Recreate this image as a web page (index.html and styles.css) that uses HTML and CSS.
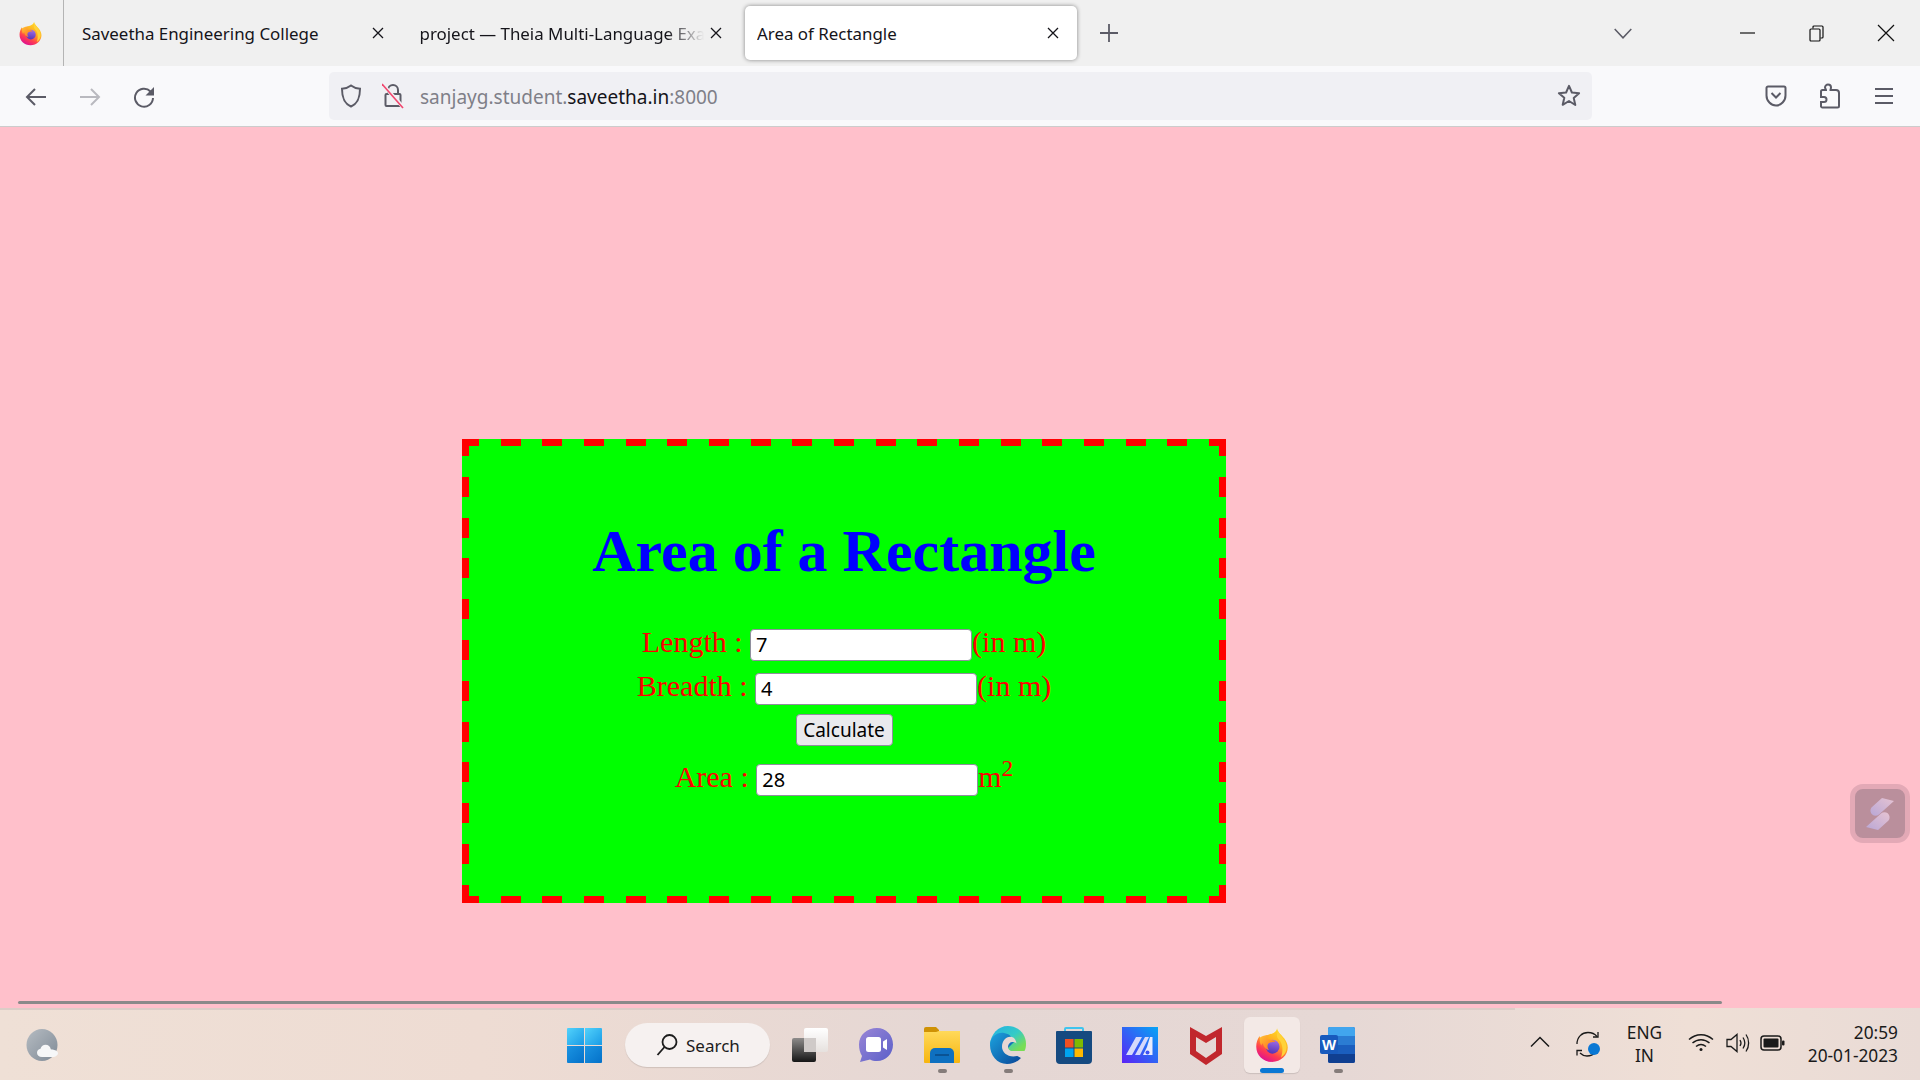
FILE: index.html
```html
<!DOCTYPE html>
<html lang="en">
<head>
  <meta charset="UTF-8">
  <title>Area of Rectangle</title>
  <link rel="stylesheet" href="styles.css">
</head>
<body>
  <svg class="defs" width="0" height="0">
    <defs>
      <linearGradient id="ffBody" x1="0.85" y1="0.05" x2="0.35" y2="1">
        <stop offset="0" stop-color="#ffe226"/>
        <stop offset="0.45" stop-color="#ffa820"/>
        <stop offset="0.75" stop-color="#ff3d4f"/>
        <stop offset="1" stop-color="#e0128f"/>
      </linearGradient>
      <linearGradient id="ffGlobe" x1="0.6" y1="0" x2="0.4" y2="1">
        <stop offset="0" stop-color="#a06ee8"/>
        <stop offset="1" stop-color="#5433b4"/>
      </linearGradient>
      <linearGradient id="ffFox" x1="0" y1="0" x2="1" y2="1">
        <stop offset="0" stop-color="#ffc233"/>
        <stop offset="1" stop-color="#ff6a1f"/>
      </linearGradient>
      <symbol id="firefox" viewBox="0 0 32 32">
        <path fill="url(#ffBody)" d="M20.5 1c.6 4 4.300 6 6.300 9 1.900 2.800 3.200 5.300 3.200 8.200C30 25 24 31 16 31S2 25 2 17.500c0-3.500 1-6.800 3-9.500 .1 1.700.7 3 1.800 4 .9-2.700 3-4.600 6-5.200 3.500-.9 7.200-2 7.700-5.800z"/>
        <path fill="#ffd23a" d="M21 3c3 6 8 9 8 15 0 4-2 7-5 9 2-5 2-12-2-16-3-3-1-6-1-8z"/>
        <circle cx="16.500" cy="17.500" r="6.200" fill="url(#ffGlobe)"/>
        <path fill="url(#ffFox)" d="M5 9.500c2.500-2 5.500-2.700 8.500-2-1.500.8-2.300 1.700-2.500 3 2.500 1.300 6.500.6 8 2.500-2.200.2-4.500.5-5.800 1.500-1.700 1.300-1.500 4.300.3 6-2.700-.5-5.300-2.700-5.500-6-.7.3-1.200 1-1.500 2C5.300 14.800 5 12 5 9.500z"/>
      </symbol>
    </defs>
  </svg>

  <div class="tabbar">
    <div class="app-logo">
      <svg class="tab-ff" viewBox="0 0 32 32"><use href="#firefox"/></svg>
    </div>
    <div class="tabs">
      <div class="tab">
        <span class="tab-title">Saveetha Engineering College</span>
        <svg class="tab-close" viewBox="0 0 12 12"><path d="M1 1l10 10M11 1L1 11"/></svg>
      </div>
      <div class="tab">
        <span class="tab-title tab-fade">project — Theia Multi-Language Example</span>
        <svg class="tab-close" viewBox="0 0 12 12"><path d="M1 1l10 10M11 1L1 11"/></svg>
      </div>
      <div class="tab tab-active">
        <span class="tab-title">Area of Rectangle</span>
        <svg class="tab-close" viewBox="0 0 12 12"><path d="M1 1l10 10M11 1L1 11"/></svg>
      </div>
    </div>
    <svg class="new-tab" viewBox="0 0 18 18"><path d="M9 0v18M0 9h18"/></svg>
    <svg class="tab-list" viewBox="0 0 18 11"><path d="M.7 1L9 9.800 17.300 1"/></svg>
    <div class="win-btn">
      <svg width="15" height="2" viewBox="0 0 15 2"><path d="M0 1h15" stroke="#111" stroke-width="1.200"/></svg>
    </div>
    <div class="win-btn">
      <svg width="15" height="17" viewBox="0 0 15 17" fill="none" stroke="#111" stroke-width="1.200"><rect x="1" y="4" width="10" height="12" rx="1"/><path d="M4 3.500V2a1 1 0 011-1h8a1 1 0 011 1v10a1 1 0 01-1 1h-1.500"/></svg>
    </div>
    <div class="win-btn">
      <svg width="18" height="18" viewBox="0 0 18 18"><path d="M1 1l16 16M17 1L1 17" stroke="#111" stroke-width="1.200"/></svg>
    </div>
  </div>

  <div class="toolbar">
    <div class="nav-btn nav-low">
      <svg class="ico" width="22" height="20" viewBox="0 0 22 20"><path d="M21 10H2M10 2l-8 8 8 8"/></svg>
    </div>
    <div class="nav-btn nav-low nav-off">
      <svg class="ico" width="22" height="20" viewBox="0 0 22 20"><path d="M1 10h19M12 2l8 8-8 8"/></svg>
    </div>
    <div class="nav-btn nav-low">
      <svg class="ico" width="22" height="22" viewBox="0 0 22 22"><path d="M17.500 5.500A9 9 0 1020 12"/><path class="solid" d="M21 1v8.500h-8.500z"/></svg>
    </div>
    <div class="urlbar">
      <svg class="ico url-ico" width="22" height="24" viewBox="0 0 22 24"><path d="M11 1.500c2.500 2 5.500 3 9 3.200 0 7-1 14-9 17.800C3 18.700 2 11.700 2 4.700c3.500-.2 6.500-1.200 9-3.200z"/></svg>
      <svg class="url-lock" width="22" height="26" viewBox="0 0 22 26" fill="none"><path stroke="#5b5b66" stroke-width="2" d="M6 11V7a5 5 0 0110 0v4M4.500 11h13a1 1 0 011 1v10a1 1 0 01-1 1h-13a1 1 0 01-1-1V12a1 1 0 011-1z"/><path stroke="#f2f0f4" stroke-width="4" d="M1 2l20 22"/><path stroke="#f0476f" stroke-width="1.600" d="M0 1l21 24"/></svg>
      <div class="url-text"><span class="url-dim">sanjayg.student.</span>saveetha.in<span class="url-dim">:8000</span></div>
      <svg class="ico url-star" width="24" height="24" viewBox="0 0 24 24"><path d="M12 1.800l2.900 6.700 7.200.7-5.400 4.700 1.600 7.100L12 17l-6.300 3.800 1.600-7.100L1.900 9.200l7.200-.7z" stroke-linejoin="round"/></svg>
    </div>
    <div class="nav-btn nav-first">
      <svg class="ico" width="22" height="22" viewBox="0 0 22 22"><path d="M3 1.500h16a1.500 1.500 0 011.500 1.500v7.500c0 5.500-4.500 10-9.500 10s-9.500-4.500-9.500-10V3A1.500 1.500 0 013 1.500z"/><path d="M6.500 8l4.500 4.500L15.500 8"/></svg>
    </div>
    <div class="nav-btn">
      <svg class="ico" width="22" height="26" viewBox="0 0 22 26"><path d="M9 1.500c2 0 3 1.500 3 3 0 1-.5 1.500-.5 2.500h5.500a3 3 0 013 3v13a1.500 1.500 0 01-1.500 1.500H3.500A1.500 1.500 0 012 23.500V19h3a2.500 2.500 0 000-5H2v-5.500A1.500 1.500 0 013.500 7h3.500c0-1-1-1.500-1-2.500 0-1.500 1.500-3 3-3z"/></svg>
    </div>
    <div class="nav-btn">
      <svg class="ico" width="20" height="18" viewBox="0 0 20 18"><path d="M1 2h18M1 9h18M1 16h18"/></svg>
    </div>
  </div>

  <main class="page">
    <section class="panel">
      <h1 class="panel-title">Area of a Rectangle</h1>
      <form class="calc">
        <div class="row">Length : <input class="field" type="text" value="7">(in m)</div>
        <div class="row">Breadth : <input class="field" type="text" value="4">(in m)</div>
        <div class="row row-btn"><button class="calc-btn" type="button">Calculate</button></div>
        <div class="row">Area : <input class="field" type="text" value="28">m<sup class="sq">2</sup></div>
      </form>
    </section>

    <div class="scroll-thumb"></div>

    <div class="float-widget">
      <svg width="38" height="38" viewBox="0 0 38 38">
        <defs>
          <linearGradient id="swoosh" x1="0" y1="1" x2="1" y2="0">
            <stop offset="0" stop-color="#b9a7d6"/>
            <stop offset="1" stop-color="#e6c3d2"/>
          </linearGradient>
        </defs>
        <path fill="url(#swoosh)" d="M21 3l12 3-15 13.500c-3 2.500-8 1-8.500-3-.3-2 .5-3.500 1.500-4.500z"/>
        <path fill="url(#swoosh)" d="M17 35L5 32l15-13.500c3-2.500 8-1 8.500 3 .3 2-.5 3.500-1.500 4.500z"/>
      </svg>
    </div>
  </main>

  <footer class="taskbar">
    <div class="task-edge"></div>
    <div class="weather">
      <svg width="32" height="32" viewBox="0 0 32 32">
        <defs>
          <linearGradient id="wx" x1="0" y1="0" x2="1" y2="1">
            <stop offset="0" stop-color="#b6bcc2"/>
            <stop offset="1" stop-color="#7f8a96"/>
          </linearGradient>
        </defs>
        <ellipse cx="16" cy="16" rx="15.500" ry="16" fill="url(#wx)"/>
        <path fill="#f6f7f8" d="M16 28c-3 0-5-1.800-5-4.300 0-2.200 1.500-3.800 3.500-4 .7-2.500 2.700-3.900 5-3.900 2.800 0 5 2 5.300 4.500 2.300.2 7.200 1.500 7.200 3.700 0 2.500-3 4-5 4z"/>
      </svg>
    </div>
    <div class="task-start">
      <svg width="35" height="35" viewBox="0 0 35 35">
        <defs>
          <linearGradient id="winA" x1="0" y1="0" x2="1" y2="1">
            <stop offset="0" stop-color="#52d2fb"/>
            <stop offset="1" stop-color="#1a9be6"/>
          </linearGradient>
          <linearGradient id="winB" x1="0" y1="0" x2="1" y2="1">
            <stop offset="0" stop-color="#1b94e2"/>
            <stop offset="1" stop-color="#0471c9"/>
          </linearGradient>
        </defs>
        <path fill="url(#winA)" d="M1 0h16v17H0V1a1 1 0 011-1z"/>
        <path fill="url(#winA)" d="M18 0h16a1 1 0 011 1v16H18z"/>
        <path fill="url(#winB)" d="M0 18h17v17H1a1 1 0 01-1-1z"/>
        <path fill="url(#winB)" d="M18 18h17v16a1 1 0 01-1 1H18z"/>
      </svg>
    </div>
    <div class="task-search">
      <svg width="22" height="24" viewBox="0 0 22 24" fill="none" stroke="#1c1c1c" stroke-width="1.800"><circle cx="13.500" cy="9" r="7"/><path d="M8.500 14L1.500 22"/></svg>
      <span>Search</span>
    </div>
    <div class="task-apps">
      <div class="task-app">
        <svg width="38" height="36" viewBox="0 0 38 36">
          <defs>
            <linearGradient id="tvA" x1="0" y1="0" x2="0" y2="1">
              <stop offset="0" stop-color="#ffffff"/>
              <stop offset="1" stop-color="#e6e1de"/>
            </linearGradient>
            <linearGradient id="tvB" x1="0" y1="0" x2="0" y2="1">
              <stop offset="0" stop-color="#8e8c8b"/>
              <stop offset="1" stop-color="#161616"/>
            </linearGradient>
          </defs>
          <rect x="13" y="1" width="24" height="24" rx="2" fill="url(#tvA)"/>
          <rect x="1" y="11" width="24" height="24" rx="2" fill="url(#tvB)"/>
          <path d="M13 11h12v14H13z" fill="#cfcac8"/>
        </svg>
      </div>
      <div class="task-app">
        <svg width="36" height="36" viewBox="0 0 36 36">
          <defs>
            <linearGradient id="chat" x1="0" y1="0" x2="1" y2="1">
              <stop offset="0" stop-color="#9a86d6"/>
              <stop offset="1" stop-color="#5a5fc9"/>
            </linearGradient>
          </defs>
          <path fill="url(#chat)" d="M19 1c9 0 16 7 16 16.500S28 34 19 34c-3 0-5-.5-7-1.500L2 35l2-6c-2-3-3-7-3-11.500C1 8 9 1 19 1z"/>
          <rect x="8" y="10" width="15" height="15" rx="2.500" fill="#fff"/>
          <path fill="#fff" d="M25 14.500l4-2.500v11l-4-2.500z"/>
        </svg>
      </div>
      <div class="task-app task-open">
        <svg width="36" height="36" viewBox="0 0 36 36">
          <defs>
            <linearGradient id="fold" x1="0" y1="0" x2="0" y2="1">
              <stop offset="0" stop-color="#ffd95a"/>
              <stop offset="1" stop-color="#f7b50f"/>
            </linearGradient>
          </defs>
          <path fill="#cf9205" d="M0 2a2 2 0 012-2h10l3 3v6H0z"/>
          <path fill="url(#fold)" d="M0 5h12l3-1h21v31a1 1 0 01-1 1H1a1 1 0 01-1-1z"/>
          <path fill="#0e70c0" d="M6 36V26a5 5 0 015-5h14a5 5 0 015 5v10z"/>
          <path stroke="#0a4a86" stroke-width="1.500" d="M11 28h14"/>
        </svg>
      </div>
      <div class="task-app task-open">
        <svg width="36" height="38" viewBox="0 0 36 38">
          <defs>
            <linearGradient id="edgeA" x1="0.2" y1="0" x2="1" y2="0.7">
              <stop offset="0" stop-color="#26b5e0"/>
              <stop offset="0.55" stop-color="#35cbc6"/>
              <stop offset="1" stop-color="#78dd55"/>
            </linearGradient>
            <linearGradient id="edgeB" x1="0" y1="0.2" x2="0.8" y2="1">
              <stop offset="0" stop-color="#1a9ad8"/>
              <stop offset="1" stop-color="#0b4f9e"/>
            </linearGradient>
          </defs>
          <path fill="url(#edgeA)" d="M18 0C8 0 1 8 0 18l20 7h14.500c1-2 1.500-4 1.500-7C36 8 28 0 18 0z"/>
          <path fill="url(#edgeB)" d="M0 19C0 11 7 6 14 7c5 .7 9 4 10 9l-8 8 15 8c-4 4-8 6-14 6C7 38 0 29 0 19z"/>
          <path fill="#e5d7d4" d="M22 11c-6-1-10 4-10 10 0 6 7 11 15 9 3-.7 6-3 8-5-3 1-8 1-12 .5-3-.5-5-2-5-4.500 0-3 2-5 4.500-5 2 0 3 .5 4 1.500-.5-3-2-6-4.500-6.500z"/>
        </svg>
      </div>
      <div class="task-app">
        <svg width="36" height="38" viewBox="0 0 36 38">
          <path fill="none" stroke="#3fc4ee" stroke-width="2" d="M9 7V3a1 1 0 011-1h16a1 1 0 011 1v4"/>
          <path fill="#154a80" d="M1 5h34a1 1 0 011 1v28a4 4 0 01-4 4H4a4 4 0 01-4-4V6a1 1 0 011-1z"/>
          <rect x="9" y="13" width="8.500" height="8.500" fill="#f25022"/>
          <rect x="18.500" y="13" width="8.500" height="8.500" fill="#7fba00"/>
          <rect x="9" y="22.500" width="8.500" height="8.500" fill="#00a4ef"/>
          <rect x="18.500" y="22.500" width="8.500" height="8.500" fill="#ffb900"/>
        </svg>
      </div>
      <div class="task-app">
        <svg width="36" height="36" viewBox="0 0 36 36">
          <defs>
            <linearGradient id="ma" x1="0" y1="1" x2="1" y2="0">
              <stop offset="0" stop-color="#5b22f5"/>
              <stop offset="1" stop-color="#05a5f5"/>
            </linearGradient>
          </defs>
          <rect width="36" height="36" fill="url(#ma)"/>
          <path fill="#d5d9fb" d="M4 28L14 10h6L10 28zM13 28L23 10h4L18 28z"/>
          <path fill="#e8ebfd" d="M25 20l3-10h2.500v18H21z"/>
          <circle cx="25.500" cy="25.500" r="2" fill="#3c52f5"/>
        </svg>
      </div>
      <div class="task-app">
        <svg width="32" height="40" viewBox="0 0 32 40"><path fill="#c1272d" fill-rule="evenodd" d="M0 2l16 9 16-9v27l-16 11L0 29zM6 12v14l10 7 10-7V12l-10 6z"/></svg>
      </div>
      <div class="task-app task-current">
        <svg width="36" height="38" viewBox="0 0 32 32"><use href="#firefox"/></svg>
      </div>
      <div class="task-app task-open">
        <svg width="36" height="38" viewBox="0 0 36 38">
          <rect x="8" y="1" width="27" height="36" rx="2" fill="#1b5ebe"/>
          <path fill="#41a5ee" d="M10 1h23a2 2 0 012 2v7H8V3a2 2 0 012-2z"/>
          <path fill="#2b7cd3" d="M8 10h27v9H8z"/>
          <path fill="#103f91" d="M8 28h27v7a2 2 0 01-2 2H10a2 2 0 01-2-2z"/>
          <rect y="9" width="18" height="19" rx="2" fill="#185abd"/>
          <text class="word-w" x="9" y="24">W</text>
        </svg>
      </div>
    </div>
    <div class="tray">
      <svg class="tray-chev" width="20" height="12" viewBox="0 0 20 12" fill="none" stroke="#1a1a1a" stroke-width="1.500"><path d="M1 10.500L10 1.500l9 9"/></svg>
      <svg class="tray-sync" width="26" height="26" viewBox="0 0 26 26" fill="none" stroke="#1a1a1a" stroke-width="1.300">
        <path d="M2 13C2 6 7 1.500 13 1.500c4 0 7 1.500 9 4"/><path d="M23 1v5h-5"/>
        <path d="M20 21.500c-2 2.500-5 3.500-8 3.500-3 0-5-1-7-3"/><path d="M2 24.500v-5h5"/>
        <circle class="sync-dot" cx="19" cy="18" r="6"/>
      </svg>
      <div class="tray-lang"><span>ENG</span><span>IN</span></div>
      <svg class="tray-wifi" width="26" height="20" viewBox="0 0 26 20" fill="none" stroke="#1a1a1a" stroke-width="1.500"><path d="M1 7.500c7-6.500 17-6.500 24 0M4.500 11c5-4.500 12-4.500 17 0M8 14.500c3-2.500 7-2.500 10 0"/><circle cx="13" cy="17.500" r="1.500" fill="#1a1a1a" stroke="none"/></svg>
      <svg class="tray-vol" width="24" height="22" viewBox="0 0 24 22" fill="none" stroke="#1a1a1a" stroke-width="1.300"><path d="M1 7.500h4L11 2.500v17l-6-5H1z"/><path d="M14 8c1.200 1.800 1.200 4.200 0 6M17 5.500c2.200 3.300 2.200 7.700 0 11M20 2.500c3.500 5 3.500 12 0 17"/></svg>
      <svg class="tray-batt" width="25" height="16" viewBox="0 0 25 16"><rect x="1" y="1" width="20" height="14" rx="3" fill="none" stroke="#1a1a1a" stroke-width="1.500"/><rect x="3.500" y="3.500" width="15" height="9" rx="1" fill="#1a1a1a"/><rect x="22" y="5.500" width="2.500" height="5" rx="1" fill="#1a1a1a"/></svg>
      <div class="tray-clock"><span>20:59</span><span>20-01-2023</span></div>
    </div>
  </footer>
</body>
</html>
```

FILE: styles.css
```css
* {
  box-sizing: border-box;
}

html, body {
  height: 100%;
}

body {
  margin: 0;
  height: 1080px;
  display: flex;
  flex-direction: column;
  overflow: hidden;
  font-family: "Noto Sans", sans-serif;
  background: #ffc0cb;
}

.defs {
  position: absolute;
}

/* tab strip */
.tabbar {
  height: 66px;
  flex: none;
  display: flex;
  align-items: center;
  background: #f0f0f0;
}

.app-logo {
  width: 64px;
  height: 66px;
  flex: none;
  display: flex;
  align-items: center;
  padding-left: 18px;
  border-right: 1px solid #b4b4b4;
}

.tab-ff {
  width: 25px;
  height: 25px;
}

.tabs {
  display: flex;
  gap: 5.5px;
  padding-left: 6px;
}

.tab {
  width: 332px;
  height: 54px;
  display: flex;
  align-items: center;
  padding: 0 18px 0 12px;
  font-size: 16.900px;
  color: #15141a;
}

.tab-title {
  flex: 1;
  min-width: 0;
  white-space: nowrap;
  overflow: hidden;
}

.tab-fade {
  -webkit-mask-image: linear-gradient(90deg, #000 85%, transparent 98%);
  mask-image: linear-gradient(90deg, #000 85%, transparent 98%);
}

.tab-active {
  background: #fff;
  border-radius: 5px;
  box-shadow: 0 0 4px rgba(0, 0, 0, 0.45);
}

.tab-close {
  width: 12px;
  height: 12px;
  flex: none;
  fill: none;
  stroke: #15141a;
  stroke-width: 1.300;
}

.new-tab {
  width: 18px;
  height: 18px;
  flex: none;
  margin-left: 23px;
  fill: none;
  stroke: #5b5b66;
  stroke-width: 1.800;
}

.tab-list {
  width: 18px;
  height: 11px;
  flex: none;
  margin-left: auto;
  margin-right: 81px;
  fill: none;
  stroke: #5b5b66;
  stroke-width: 1.500;
}

.win-btn {
  width: 69px;
  height: 66px;
  flex: none;
  display: flex;
  align-items: center;
  justify-content: center;
}

/* address row */
.toolbar {
  height: 61px;
  flex: none;
  display: flex;
  align-items: center;
  gap: 10px;
  padding: 0 0 0 14px;
  background: #f9f9fb;
  border-bottom: 1px solid #ccc;
}

.nav-btn {
  width: 44px;
  height: 44px;
  flex: none;
  display: flex;
  align-items: center;
  justify-content: center;
}

.nav-low {
  padding-top: 2px;
}

.nav-off {
  opacity: 0.4;
}

.nav-first {
  margin-left: 152px;
}

.ico {
  fill: none;
  stroke: #5b5b66;
  stroke-width: 2;
}

.ico .solid {
  fill: #5b5b66;
  stroke: none;
}

.urlbar {
  width: 1263px;
  height: 48px;
  flex: none;
  margin-left: 153px;
  display: flex;
  align-items: center;
  padding: 0 11px;
  background: #f0f0f4;
  border-radius: 5px;
}

.url-ico {
  flex: none;
}

.url-lock {
  flex: none;
  margin-left: 20px;
}

.url-text {
  margin-left: 16px;
  padding-top: 2px;
  font-size: 19px;
  color: #15141a;
}

.url-dim {
  color: #7f7f88;
}

.url-star {
  flex: none;
  margin-left: auto;
}

/* web page */
.page {
  flex: 1;
  position: relative;
  padding: 312px 0 0 462px;
  background: #ffc0cb;
}

.panel {
  width: 764px;
  height: 464px;
  padding: 7px;
  text-align: center;
  color: #f00;
  font-family: "Liberation Serif", serif;
  background-color: #0f0;
  background-image:
    repeating-linear-gradient(90deg, #f00 -3px, #f00 17px, transparent 17px, transparent 38.67px),
    repeating-linear-gradient(90deg, #f00 -3px, #f00 17px, transparent 17px, transparent 38.67px),
    repeating-linear-gradient(180deg, #f00 -3px, #f00 17px, transparent 17px, transparent 37.8px),
    repeating-linear-gradient(180deg, #f00 -3px, #f00 17px, transparent 17px, transparent 37.8px);
  background-size: 100% 7px, 100% 7px, 7px 100%, 7px 100%;
  background-position: 0 0, 0 100%, 0 0, 100% 0;
  background-repeat: no-repeat;
}

.panel-title {
  margin: 71px 0 34px;
  font-size: 60px;
  line-height: 69px;
  font-weight: bold;
  color: #00f;
}

.row {
  height: 44px;
  line-height: 44px;
  font-size: 30px;
  white-space: pre-wrap;
}

.row-btn {
  height: 50px;
  margin-top: -3px;
}

.field {
  width: 222px;
  height: 32px;
  padding: 0 5px;
  border: 1px solid #8f8f9d;
  border-radius: 4px;
  background: #fff;
  font-family: "Noto Sans", sans-serif;
  font-size: 20px;
  color: #000;
}

.sq {
  font-size: 23.500px;
  line-height: 0;
}

.calc-btn {
  width: 97px;
  height: 32px;
  padding: 0;
  border: 1px solid #8f8f9d;
  border-radius: 4px;
  background: #e9e9ed;
  font-family: "Noto Sans", sans-serif;
  font-size: 19px;
  color: #000;
}

.scroll-thumb {
  position: absolute;
  left: 18px;
  bottom: 4px;
  width: 1704px;
  height: 3px;
  background: #8a8a8a;
  border-radius: 2px;
}

.float-widget {
  position: absolute;
  left: 1850px;
  top: 657px;
  width: 60px;
  height: 59px;
  display: flex;
  align-items: center;
  justify-content: center;
  background: #ba8f9c;
  border: 5px solid #e3a9b6;
  border-radius: 13px;
}

/* windows taskbar */
.taskbar {
  height: 72px;
  flex: none;
  position: relative;
  display: flex;
  align-items: center;
  padding-top: 2px;
  background: linear-gradient(90deg, #efe0d6 0%, #eedcd3 25%, #e5d7d4 50%, #e6d8d5 70%, #efdfd6 88%, #e9dbd6 100%);
}

.task-edge {
  position: absolute;
  left: 0;
  top: 0;
  width: 1515px;
  height: 2px;
  background: #dccdc7;
}

.weather {
  width: 32px;
  height: 32px;
  margin-left: 26px;
  flex: none;
}

.task-start {
  width: 66px;
  height: 66px;
  margin-left: 493px;
  flex: none;
  display: flex;
  align-items: center;
  justify-content: center;
}

.task-search {
  width: 145px;
  height: 44px;
  margin-left: 8px;
  flex: none;
  display: flex;
  align-items: center;
  gap: 8px;
  padding-left: 31px;
  background: #f6f1f0;
  border-radius: 22px;
  box-shadow: 0 1px 1px rgba(0, 0, 0, 0.12);
  font-size: 17px;
  color: #1c1c1c;
}

.task-apps {
  display: flex;
  margin-left: 6.5px;
  flex: none;
}

.task-app {
  width: 66px;
  height: 72px;
  position: relative;
  display: flex;
  align-items: center;
  justify-content: center;
}

.task-open::after {
  content: "";
  position: absolute;
  left: 29px;
  top: 60px;
  width: 9px;
  height: 4px;
  border-radius: 2px;
  background: #857c7a;
}

.task-current::before {
  content: "";
  position: absolute;
  left: 5px;
  top: 8px;
  width: 56px;
  height: 56px;
  border-radius: 6px;
  background: #f3e9e6;
  box-shadow: 0 1px 1px rgba(0, 0, 0, 0.12);
}

.task-current svg {
  position: relative;
}

.task-current::after {
  content: "";
  position: absolute;
  left: 21px;
  top: 59px;
  width: 24px;
  height: 5px;
  border-radius: 3px;
  background: #0a78d4;
}

.word-w {
  font-family: "Liberation Sans", sans-serif;
  font-size: 15px;
  font-weight: bold;
  fill: #fff;
  text-anchor: middle;
}

.tray {
  margin-left: auto;
  margin-right: 22px;
  margin-top: -2px;
  display: flex;
  align-items: center;
  flex: none;
  color: #1a1a1a;
  font-size: 17.300px;
  line-height: 23px;
}

.tray-chev {
  margin-right: 24.500px;
  margin-top: -4px;
}

.tray-sync {
  margin-right: 20px;
}

.sync-dot {
  fill: #0a78d4;
  stroke: none;
}

.tray-lang {
  width: 48px;
  display: flex;
  flex-direction: column;
  align-items: center;
  margin-right: 19px;
}

.tray-wifi {
  margin-right: 12px;
  margin-top: -4px;
}

.tray-vol {
  margin-right: 10px;
  margin-top: -2px;
}

.tray-batt {
  margin-right: 13.500px;
  margin-top: -2px;
}

.tray-clock {
  width: 100px;
  display: flex;
  flex-direction: column;
  align-items: flex-end;
}
```
